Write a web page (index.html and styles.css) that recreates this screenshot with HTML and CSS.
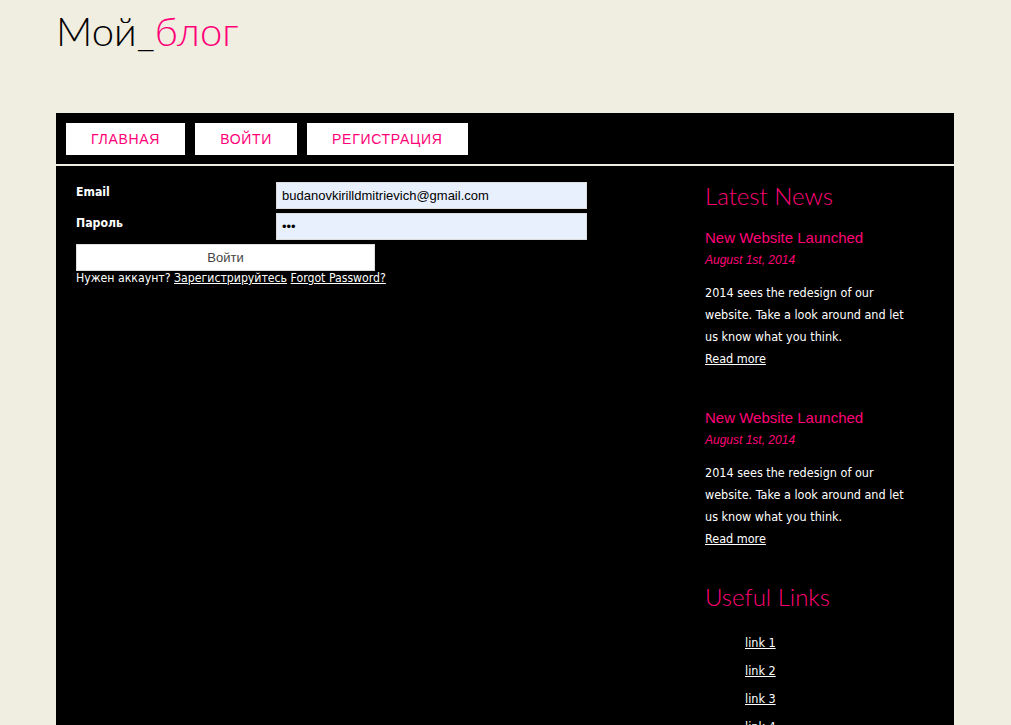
FILE: index.html
```html
<!DOCTYPE html>
<html lang="ru">
<head>
<meta charset="utf-8">
<title>Мой блог</title>
<link rel="stylesheet" href="styles.css">
</head>
<body>
<div class="page">
  <header class="logo"><span class="logo-black">Мой_</span><span class="logo-pink">блог</span></header>
  <div class="main">
    <nav class="menu">
      <a class="menu-item" href="#">ГЛАВНАЯ</a>
      <a class="menu-item" href="#">ВОЙТИ</a>
      <a class="menu-item" href="#">РЕГИСТРАЦИЯ</a>
    </nav>
    <div class="content">
      <section class="login">
        <div class="row">
          <label class="label">Email</label>
          <input class="field" type="text" value="budanovkirilldmitrievich@gmail.com">
        </div>
        <div class="row">
          <label class="label">Пароль</label>
          <input class="field" type="password" value="abc">
        </div>
        <button class="submit">Войти</button>
        <p class="hint">Нужен аккаунт? <a href="#">Зарегистрируйтесь</a> <a href="#">Forgot Password?</a></p>
      </section>
      <aside class="sidebar">
        <h2 class="side-title">Latest News</h2>
        <article class="news">
          <h3 class="news-title">New Website Launched</h3>
          <h4 class="news-date">August 1st, 2014</h4>
          <p class="news-text">2014 sees the redesign of our website. Take a look around and let us know what you think.<br><a href="#">Read more</a></p>
        </article>
        <article class="news news-last">
          <h3 class="news-title">New Website Launched</h3>
          <h4 class="news-date">August 1st, 2014</h4>
          <p class="news-text">2014 sees the redesign of our website. Take a look around and let us know what you think.<br><a href="#">Read more</a></p>
        </article>
        <h2 class="side-title">Useful Links</h2>
        <ul class="links">
          <li><a href="#">link 1</a></li>
          <li><a href="#">link 2</a></li>
          <li><a href="#">link 3</a></li>
          <li><a href="#">link 4</a></li>
        </ul>
      </aside>
    </div>
  </div>
</div>
</body>
</html>
```
FILE: styles.css
```css
html, body {
  margin: 0;
  padding: 0;
  background: #f0ede1;
}
body {
  font-family: "DejaVu Sans", sans-serif;
}
.page {
  width: 898px;
  margin-left: 56px;
}
.logo {
  font-family: "Lato", "DejaVu Sans", sans-serif;
  font-weight: 300;
  font-size: 40px;
  line-height: 62px;
  height: 113px;
}
.logo-black { color: #000; }
.logo-pink { color: #ff0077; }
.main {
  background: #000;
  min-height: 612px;
}
.menu {
  display: flex;
  gap: 10px;
  padding: 10px 10px 9px;
  border-bottom: 2px solid #f0ede1;
}
.menu-item {
  display: block;
  background: #fff;
  color: #ff0077;
  text-decoration: none;
  font-family: "Liberation Sans", Arial, sans-serif;
  font-size: 14px;
  letter-spacing: 0.7px;
  height: 32px;
  line-height: 32px;
  padding: 0 25px;
}
.content {
  display: flex;
  padding-top: 16px;
}
.login {
  width: 629px;
  padding-left: 20px;
  color: #fff;
  font-family: "DejaVu Sans Condensed", "DejaVu Sans", sans-serif;
  font-size: 12.2px;
}
.row {
  display: flex;
  align-items: flex-start;
  margin-bottom: 4px;
}
.label {
  width: 200px;
  font-weight: bold;
  padding-top: 3px;
}
.field {
  width: 311px;
  height: 27px;
  box-sizing: border-box;
  border: 1px solid #ddd;
  background: #e8f0fe;
  padding: 0 5px;
  font-family: "Liberation Sans", Arial, sans-serif;
  font-size: 13px;
  color: #000;
  margin: 0;
}
.submit {
  display: block;
  width: 299px;
  height: 27px;
  margin: 0;
  background: #fff;
  border: 1px solid #ddd;
  font-family: "Liberation Sans", Arial, sans-serif;
  font-size: 13px;
  color: #444;
}
.hint {
  margin: 0;
  line-height: 15px;
}
.hint a { color: #fff; }
.sidebar {
  width: 210px;
  color: #fff;
  padding-top: 4px;
}
.side-title {
  font-family: "Lato", "DejaVu Sans", sans-serif;
  font-weight: 300;
  font-size: 24px;
  color: #ff0077;
  margin: 0 0 22px;
  line-height: 20px;
}
.news {
  margin-bottom: 38px;
}
.news-last {
  margin-bottom: 37px;
}
.news-title {
  font-family: "Liberation Sans", Arial, sans-serif;
  font-weight: normal;
  font-size: 15px;
  color: #ff0077;
  margin: 0;
  line-height: 20px;
}
.news-date {
  font-family: "Liberation Sans", Arial, sans-serif;
  font-style: italic;
  font-weight: normal;
  font-size: 12px;
  color: #ff0077;
  margin: 0 0 10px;
  line-height: 24px;
}
.news-text {
  font-family: "DejaVu Sans Condensed", "DejaVu Sans", sans-serif;
  font-size: 12.5px;
  line-height: 22px;
  margin: 0;
}
.news-text a {
  color: #fff;
  display: inline-block;
  line-height: 20px;
}
.links {
  margin: 0;
  padding-left: 40px;
  list-style: none;
  font-family: "DejaVu Sans Condensed", "DejaVu Sans", sans-serif;
  font-size: 12.5px;
}
.links li {
  line-height: 28px;
}
.links a { color: #fff; }
```
